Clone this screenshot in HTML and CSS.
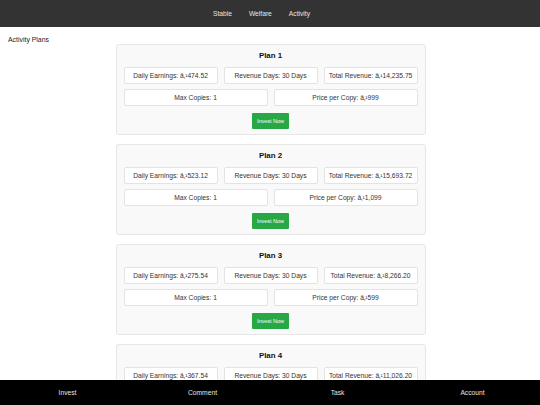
FILE: index.html
```html
<!DOCTYPE html>
<html>
<head>
<meta charset="utf-8">
<link rel="stylesheet" href="styles.css">
</head>
<body>
<header class="topbar">
  <nav class="topnav">
    <a class="topnav-link">Stable</a>
    <a class="topnav-link">Welfare</a>
    <a class="topnav-link">Activity</a>
  </nav>
</header>
<main class="content">
  <div class="section-label">Activity Plans</div>
  <div class="plans">
    <section class="plan">
      <h3 class="plan-title">Plan 1</h3>
      <div class="row row-3">
        <div class="box">Daily Earnings: â‚¹474.52</div>
        <div class="box">Revenue Days: 30 Days</div>
        <div class="box">Total Revenue: â‚¹14,235.75</div>
      </div>
      <div class="row row-2">
        <div class="box">Max Copies: 1</div>
        <div class="box">Price per Copy: â‚¹999</div>
      </div>
      <div class="actions"><button class="invest-btn">Invest Now</button></div>
    </section>
    <section class="plan">
      <h3 class="plan-title">Plan 2</h3>
      <div class="row row-3">
        <div class="box">Daily Earnings: â‚¹523.12</div>
        <div class="box">Revenue Days: 30 Days</div>
        <div class="box">Total Revenue: â‚¹15,693.72</div>
      </div>
      <div class="row row-2">
        <div class="box">Max Copies: 1</div>
        <div class="box">Price per Copy: â‚¹1,099</div>
      </div>
      <div class="actions"><button class="invest-btn">Invest Now</button></div>
    </section>
    <section class="plan">
      <h3 class="plan-title">Plan 3</h3>
      <div class="row row-3">
        <div class="box">Daily Earnings: â‚¹275.54</div>
        <div class="box">Revenue Days: 30 Days</div>
        <div class="box">Total Revenue: â‚¹8,266.20</div>
      </div>
      <div class="row row-2">
        <div class="box">Max Copies: 1</div>
        <div class="box">Price per Copy: â‚¹599</div>
      </div>
      <div class="actions"><button class="invest-btn">Invest Now</button></div>
    </section>
    <section class="plan">
      <h3 class="plan-title">Plan 4</h3>
      <div class="row row-3">
        <div class="box">Daily Earnings: â‚¹367.54</div>
        <div class="box">Revenue Days: 30 Days</div>
        <div class="box">Total Revenue: â‚¹11,026.20</div>
      </div>
      <div class="row row-2">
        <div class="box">Max Copies: 1</div>
        <div class="box">Price per Copy: â‚¹799</div>
      </div>
      <div class="actions"><button class="invest-btn">Invest Now</button></div>
    </section>
  </div>
</main>
<footer class="bottombar">
  <a class="bottom-link">Invest</a>
  <a class="bottom-link">Comment</a>
  <a class="bottom-link">Task</a>
  <a class="bottom-link">Account</a>
</footer>
</body>
</html>
```
FILE: styles.css
```css
html, body {
  margin: 0;
  padding: 0;
  background: #ffffff;
  font-family: "Liberation Sans", Arial, sans-serif;
  color: #222;
}
.topbar {
  background: #333333;
  height: 27px;
  display: flex;
  align-items: center;
  justify-content: center;
}
.topnav {
  display: flex;
  gap: 17px;
  padding-right: 17px;
}
.topnav-link {
  color: #e6e6e6;
  font-size: 6.7px;
  line-height: 8px;
}
.content {
  padding: 9px 8px 40px;
}
.section-label {
  font-size: 6.9px;
  line-height: 8px;
  color: #222;
}
.plans {
  width: 310px;
  margin: 0 auto;
  padding-left: 1px;
}
.plan {
  box-sizing: border-box;
  width: 310px;
  background: #f9f9f9;
  border: 1px solid #e6e6e6;
  border-radius: 3px;
  padding: 6px 7px 5px;
  margin-bottom: 9px;
}
.plan-title {
  margin: 0 0 7px;
  text-align: center;
  font-size: 7.9px;
  line-height: 9px;
  font-weight: bold;
  color: #111;
}
.row {
  display: grid;
  gap: 6px;
  margin-bottom: 5px;
}
.row-3 { grid-template-columns: repeat(3, 1fr); }
.row-2 { grid-template-columns: repeat(2, 1fr); }
.box {
  box-sizing: border-box;
  height: 17px;
  background: #ffffff;
  border: 1px solid #e3e3e3;
  border-radius: 2px;
  font-size: 6.7px;
  color: #333;
  display: flex;
  align-items: center;
  justify-content: center;
  white-space: nowrap;
}
.actions {
  display: flex;
  justify-content: center;
  padding-top: 2px;
}
.invest-btn {
  background: #28a745;
  color: #ffffff;
  border: none;
  border-radius: 1px;
  height: 16px;
  padding: 0 5px;
  font-family: "Liberation Sans", Arial, sans-serif;
  font-size: 5.5px;
  line-height: 16px;
}
.bottombar {
  position: fixed;
  left: 0;
  right: 0;
  bottom: 0;
  height: 25px;
  background: #000000;
  display: flex;
  justify-content: space-around;
  align-items: center;
}
.bottom-link {
  flex: 1;
  text-align: center;
  color: #e6e6e6;
  font-size: 6.7px;
}
```
